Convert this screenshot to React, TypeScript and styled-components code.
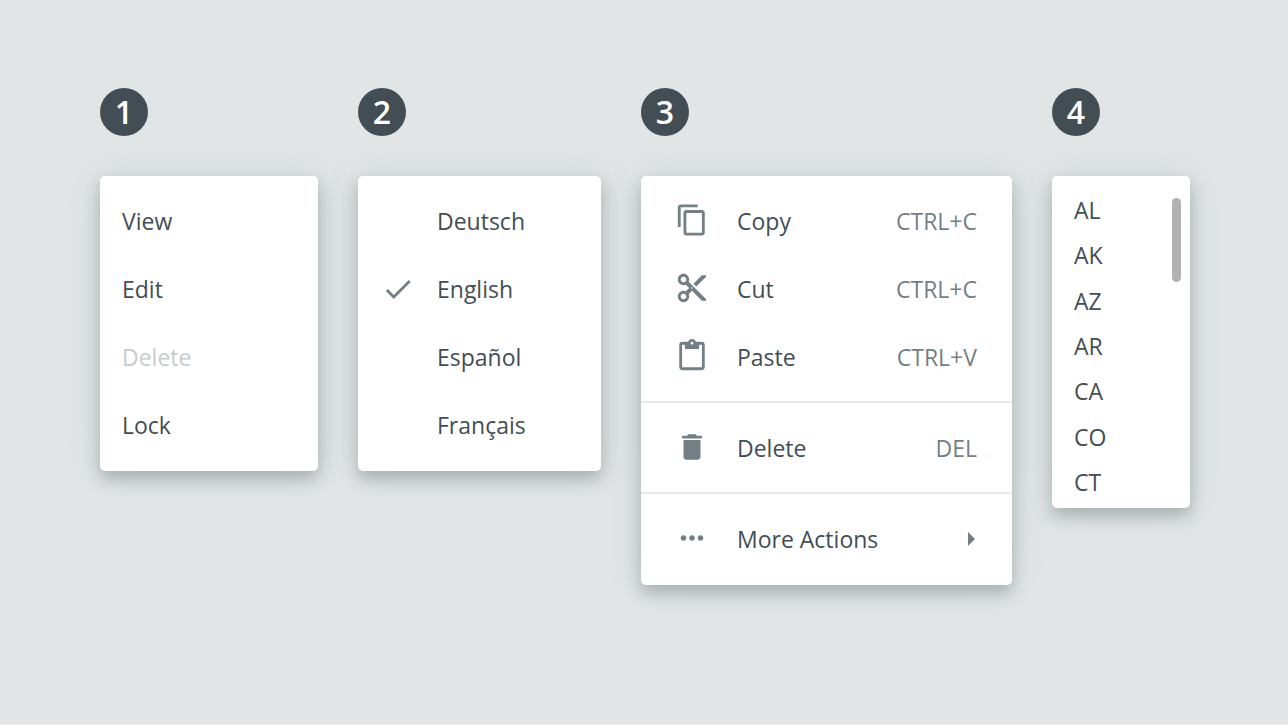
import React from "react";
import styled, { createGlobalStyle } from "styled-components";

const GlobalStyle = createGlobalStyle`
  body {
    margin: 0;
    background: #e1e5e5;
    font-family: "Open Sans", "Noto Sans", sans-serif;
    color: #434e54;
  }
`;

const Page = styled.main`
  box-sizing: border-box;
  min-height: 100vh;
  padding: 88px 98px 88px 100px;
  border-bottom: 1px solid #eff1f1;
  display: grid;
  grid-template-columns: 218fr 243fr 371fr 138fr;
  column-gap: 40px;
  align-items: start;
`;

const Example = styled.section`
  display: flex;
  flex-direction: column;
  gap: 40px;
  min-width: 0;
`;

const Badge = styled.h2`
  margin: 0;
  width: 48px;
  height: 48px;
  border-radius: 50%;
  background: #434e54;
  color: #fff;
  font-size: 32px;
  font-weight: 600;
  line-height: 48px;
  text-align: center;
`;

const Card = styled.div`
  padding-bottom: 2px;
  border-radius: 5px;
  background: #fff;
  box-shadow: 0 8px 16px rgba(67, 84, 88, 0.33), 0 0 40px rgba(67, 84, 88, 0.1);
`;

const Group = styled.div`
  padding: 11px 0 10px;

  & + & {
    border-top: 2px solid #e7eaea;
  }
`;

const Item = styled.button<{ $inset?: number; $gap?: number }>`
  width: 100%;
  height: 68px;
  padding: 0 35px 0 ${(p) => p.$inset ?? 22}px;
  border: 0;
  background: none;
  display: flex;
  align-items: center;
  gap: ${(p) => p.$gap ?? 0}px;
  font: inherit;
  font-size: 23px;
  line-height: 32px;
  color: inherit;
  text-align: left;
  white-space: nowrap;

  &:disabled {
    color: #c7cbcd;
  }
`;

const IconSlot = styled.span`
  flex: none;
  width: 34px;
  height: 34px;
  color: #737f85;
`;

const RaisedIconSlot = styled(IconSlot)`
  padding-bottom: 3px;
`;

const Icon = styled.svg`
  display: block;
  width: 34px;
  height: 34px;
  fill: currentColor;
`;

const Shortcut = styled.span`
  margin-left: auto;
  color: #737f85;
`;

const Arrow = styled.svg`
  width: 9px;
  height: 14px;
  margin-left: auto;
  fill: #737f85;
`;

const ScrollCard = styled(Card)`
  box-sizing: border-box;
  height: 332px;
  padding: 11px 9px 3px 0;
  display: flex;
  align-items: flex-start;
`;

const StateList = styled.div`
  flex: 1;
  height: 100%;
  display: flex;
  flex-direction: column;
`;

const StateItem = styled(Item)`
  flex: 1;
  height: auto;
  padding-right: 0;
`;

const Thumb = styled.div`
  width: 9px;
  height: 84px;
  margin-top: 11px;
  border-radius: 5px;
  background: #b2b2b2;
`;

const paths = {
  check: "M9 16.17L4.83 12l-1.42 1.41L9 19 21 7l-1.41-1.41z",
  copy: "M16 1H4c-1.1 0-2 .9-2 2v14h2V3h12V1zm3 4H8c-1.1 0-2 .9-2 2v14c0 1.1.9 2 2 2h11c1.1 0 2-.9 2-2V7c0-1.1-.9-2-2-2zm0 16H8V7h11v14z",
  cut: "M9.64 7.64c.23-.5.36-1.05.36-1.64 0-2.21-1.79-4-4-4S2 3.79 2 6s1.79 4 4 4c.59 0 1.14-.13 1.64-.36L10 12l-2.36 2.36C7.14 14.13 6.59 14 6 14c-2.21 0-4 1.79-4 4s1.79 4 4 4 4-1.79 4-4c0-.59-.13-1.14-.36-1.64L12 14l7 7h3v-1L9.64 7.64zM6 8c-1.1 0-2-.89-2-2s.9-2 2-2 2 .89 2 2-.9 2-2 2zm0 12c-1.1 0-2-.89-2-2s.9-2 2-2 2 .89 2 2-.9 2-2 2zm6-7.5c-.28 0-.5-.22-.5-.5s.22-.5.5-.5.5.22.5.5-.22.5-.5.5zM19 3l-6 6 2 2 7-7V3z",
  paste: "M19 2h-4.18C14.4.84 13.3 0 12 0c-1.3 0-2.4.84-2.82 2H5c-1.1 0-2 .9-2 2v16c0 1.1.9 2 2 2h14c1.1 0 2-.9 2-2V4c0-1.1-.9-2-2-2zm-7 0c.55 0 1 .45 1 1s-.45 1-1 1-1-.45-1-1 .45-1 1-1zm7 18H5V4h2v3h10V4h2v16z",
  trash: "M6 19c0 1.1.9 2 2 2h8c1.1 0 2-.9 2-2V7H6v12zM19 4h-3.5l-1-1h-5l-1 1H5v2h14V4z",
  more: "M6 10c-1.1 0-2 .9-2 2s.9 2 2 2 2-.9 2-2-.9-2-2-2zm12 0c-1.1 0-2 .9-2 2s.9 2 2 2 2-.9 2-2-.9-2-2-2zm-6 0c-1.1 0-2 .9-2 2s.9 2 2 2 2-.9 2-2-.9-2-2-2z",
};

const Glyph = ({ name }: { name: keyof typeof paths }) => (
  <Icon viewBox="0 0 24 24" aria-hidden="true">
    <path d={paths[name]} />
  </Icon>
);

type Action = { icon: keyof typeof paths; label: string; shortcut?: string };

const actionGroups: Action[][] = [
  [
    { icon: "copy", label: "Copy", shortcut: "CTRL+C" },
    { icon: "cut", label: "Cut", shortcut: "CTRL+C" },
    { icon: "paste", label: "Paste", shortcut: "CTRL+V" },
  ],
  [{ icon: "trash", label: "Delete", shortcut: "DEL" }],
  [{ icon: "more", label: "More Actions" }],
];

const commands = ["View", "Edit", "Delete", "Lock"];
const languages = ["Deutsch", "English", "Español", "Français"];
const states = ["AL", "AK", "AZ", "AR", "CA", "CO", "CT"];

export default function App() {
  return (
    <>
      <GlobalStyle />
      <Page>
        <Example>
          <Badge>1</Badge>
          <Card role="menu">
            <Group>
              {commands.map((c) => (
                <Item key={c} role="menuitem" disabled={c === "Delete"}>
                  {c}
                </Item>
              ))}
            </Group>
          </Card>
        </Example>

        <Example>
          <Badge>2</Badge>
          <Card role="menu">
            <Group>
              {languages.map((l) => (
                <Item
                  key={l}
                  role="menuitemradio"
                  aria-checked={l === "English"}
                  $inset={23}
                  $gap={22}
                >
                  <IconSlot>{l === "English" && <Glyph name="check" />}</IconSlot>
                  {l}
                </Item>
              ))}
            </Group>
          </Card>
        </Example>

        <Example>
          <Badge>3</Badge>
          <Card role="menu">
            {actionGroups.map((group, i) => (
              <Group key={i}>
                {group.map((a) => (
                  <Item key={a.label} role="menuitem" $inset={34} $gap={28}>
                    <RaisedIconSlot>
                      <Glyph name={a.icon} />
                    </RaisedIconSlot>
                    {a.label}
                    {a.shortcut ? (
                      <Shortcut>{a.shortcut}</Shortcut>
                    ) : (
                      <Arrow viewBox="0 0 9 14" aria-hidden="true">
                        <path d="M0 0l7 7-7 7z" />
                      </Arrow>
                    )}
                  </Item>
                ))}
              </Group>
            ))}
          </Card>
        </Example>

        <Example>
          <Badge>4</Badge>
          <ScrollCard>
            <StateList role="menu">
              {states.map((s) => (
                <StateItem key={s} role="menuitem">
                  {s}
                </StateItem>
              ))}
            </StateList>
            <Thumb />
          </ScrollCard>
        </Example>
      </Page>
    </>
  );
}
